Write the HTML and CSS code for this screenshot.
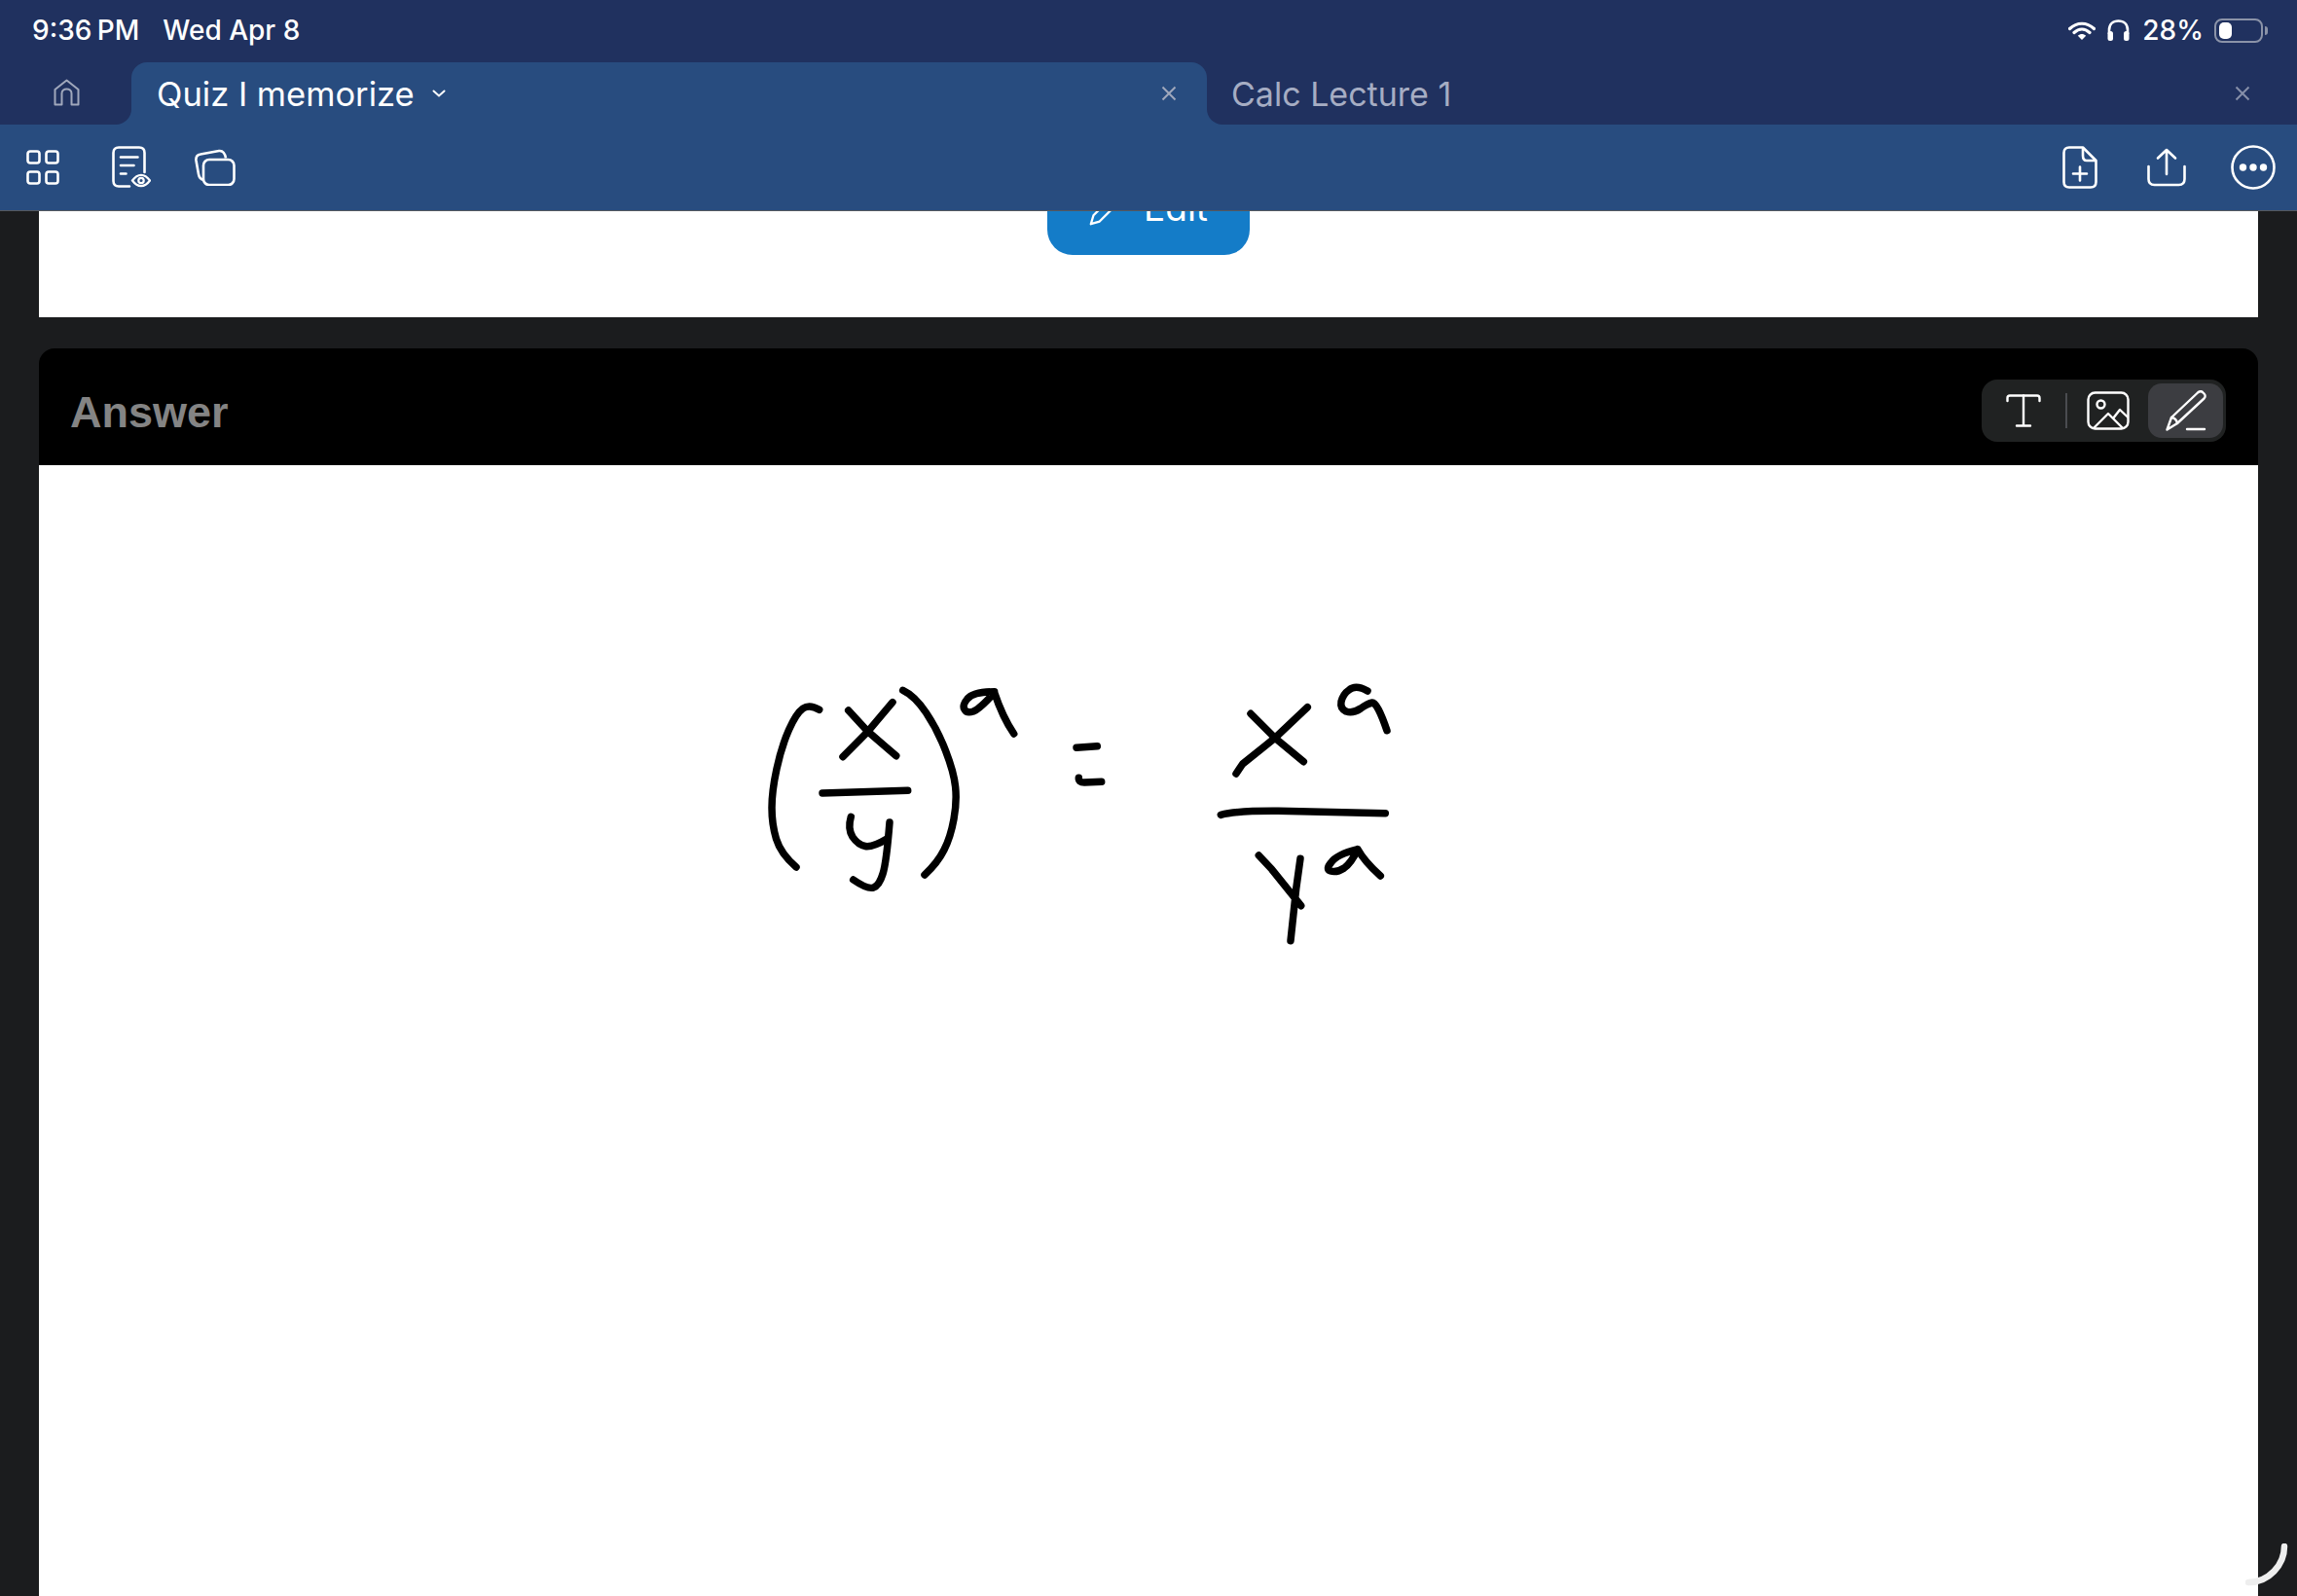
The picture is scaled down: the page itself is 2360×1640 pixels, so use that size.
FILE: index.html
```html
<!DOCTYPE html>
<html lang="en">
<head>
    <meta charset="UTF-8">
    <meta name="viewport" content="width=device-width, initial-scale=1.0">
    <title>Quiz I memorize</title>
    <link rel="stylesheet" href="styles.css">
</head>
<body>
    <header class="app-header">
        <div class="status-bar">
            <div class="status-left">
                <span class="status-time">9:36 PM</span>
                <span>Wed Apr 8</span>
            </div>
            <div class="status-right">
                <svg class="ic-wifi" viewBox="0 0 28 19"><path d="M1.500 7.500C9 .5 19 .5 26.500 7.500M6 11.500C11 7 17 7 22 11.500" fill="none" stroke="#fff" stroke-width="3.200" stroke-linecap="round"/><path d="M9.800 14.800C12.500 12.500 15.500 12.500 18.200 14.800L14 19Z" fill="#fff"/></svg>
                <svg class="ic-phones" viewBox="0 0 23 22"><path d="M2 15V11C2 5 6 1.500 11.500 1.500S21 5 21 11V15" fill="none" stroke="#fff" stroke-width="2.600"/><rect x="0.500" y="12" width="5.500" height="10" rx="2.500" fill="#fff"/><rect x="17" y="12" width="5.500" height="10" rx="2.500" fill="#fff"/></svg>
                <span class="status-pct">28%</span>
                <div class="battery"><div class="battery-fill"></div></div>
                <div class="battery-nub"></div>
            </div>
        </div>

        <div class="tab-row">
            <div class="tab-home">
                <svg class="ic-home" viewBox="0 0 27 28"><path d="M1.500 26.500V11L13.500 1.500 25.500 11V26.500H18.500V15C18.500 9 8.500 9 8.500 15V26.500Z" fill="none" stroke="#a0a8bc" stroke-width="2" stroke-linejoin="round"/></svg>
            </div>
            <div class="tab tab-active">
                <span class="tab-title">Quiz I memorize</span>
                <svg class="ic-chevron" viewBox="0 0 14 8"><path d="M1.500 1.500 7 6.500 12.500 1.500" fill="none" stroke="#fff" stroke-width="2" stroke-linecap="round"/></svg>
                <svg class="ic-close" viewBox="0 0 16 16"><path d="M1.500 1.500 14.500 14.500M14.500 1.500 1.500 14.500" stroke="#a0a8bc" stroke-width="2"/></svg>
            </div>
            <div class="tab tab-other">
                <span class="tab-title">Calc Lecture 1</span>
                <svg class="ic-close" viewBox="0 0 16 16"><path d="M1.500 1.500 14.500 14.500M14.500 1.500 1.500 14.500" stroke="#868fa9" stroke-width="2"/></svg>
            </div>
        </div>

        <div class="toolbar">
            <div class="toolbar-group">
                <svg class="ic-grid" viewBox="0 0 34 36" fill="none" stroke="#fff" stroke-width="2.600">
                    <rect x="1.500" y="1.500" width="12" height="12" rx="2.500"/>
                    <rect x="20.500" y="1.500" width="12" height="12" rx="2.500"/>
                    <rect x="1.500" y="22.500" width="12" height="12" rx="2.500"/>
                    <rect x="20.500" y="22.500" width="12" height="12" rx="2.500"/>
                </svg>
                <svg class="ic-note" viewBox="0 0 40 44" fill="none" stroke="#fff" stroke-width="2.600" stroke-linecap="round">
                    <path d="M18 41.500H7C3.500 41.500 1.500 39.500 1.500 36V7C1.500 3.500 3.500 1.500 7 1.500H28C31.500 1.500 33.500 3.500 33.500 7V27"/>
                    <path d="M9 11.500H26.500M9 20H22.500M9 28.500H14.500"/>
                    <path d="M21 35.500C26.500 28 33.500 28 39 35.500 33.500 43 26.500 43 21 35.500Z" stroke-width="2.200"/>
                    <circle cx="30" cy="35.500" r="2.700" stroke-width="2.200"/>
                </svg>
                <svg class="ic-stack" viewBox="0 0 42 38" fill="none" stroke="#fff" stroke-width="2.600">
                    <path d="M32 9.500C31 4 29 1.500 25 2L6 5.500C2.500 6 1 8 1.500 12L4 26C4.500 29 6 31 9 32"/>
                    <rect x="9" y="11" width="31.500" height="26" rx="6"/>
                </svg>
            </div>
            <div class="toolbar-group toolbar-right">
                <svg class="ic-newfile" viewBox="0 0 36 44" fill="none" stroke="#fff" stroke-width="2.600" stroke-linejoin="round">
                    <path d="M21 1.500H7C3.500 1.500 1.500 3.500 1.500 7V37C1.500 40.500 3.500 42.500 7 42.500H29C32.500 42.500 34.500 40.500 34.500 37V15Z"/>
                    <path d="M21 1.500V10C21 13 22.500 15 25 15H34.500"/>
                    <path d="M18 21.500V35.500M11 28.500H25" stroke-linecap="round"/>
                </svg>
                <svg class="ic-share" viewBox="0 0 40 40" fill="none" stroke="#fff" stroke-width="2.600" stroke-linecap="round" stroke-linejoin="round">
                    <path d="M20 27V2M11 10.500 20 2 29 10.500"/>
                    <path d="M1.500 19V32C1.500 36 3.500 38 7.500 38H32.500C36.500 38 38.500 36 38.500 32V19"/>
                </svg>
                <svg class="ic-more" viewBox="0 0 46 46">
                    <circle cx="23" cy="23" r="21.500" fill="none" stroke="#fff" stroke-width="2.600"/>
                    <circle cx="12.500" cy="23" r="3.700" fill="#fff"/>
                    <circle cx="23" cy="23" r="3.700" fill="#fff"/>
                    <circle cx="33.500" cy="23" r="3.700" fill="#fff"/>
                </svg>
            </div>
        </div>
    </header>

    <main class="page">
        <section class="question-card">
            <button class="edit-btn">
                <svg class="ic-edit" viewBox="0 0 38 38"><path d="M29 2 36 9 12 33 2 36 5 26Z" fill="none" stroke="#fff" stroke-width="2.600" stroke-linejoin="round"/></svg>
                <span>Edit</span>
            </button>
        </section>

        <section class="answer">
            <div class="answer-head">
                <h2 class="answer-title">Answer</h2>
                <div class="mode-picker">
                    <button class="mode-btn mode-text">
                        <svg class="ic-t" viewBox="0 0 36 34" fill="none" stroke="#fff" stroke-width="2.400" stroke-linecap="round">
                            <path d="M1.500 7V4C1.500 2.500 2.500 1.500 4 1.500H32C33.500 1.500 34.500 2.500 34.500 4V7"/>
                            <path d="M18 1.500V32.500M11 32.500H25"/>
                        </svg>
                    </button>
                    <div class="mode-sep"></div>
                    <button class="mode-btn mode-image">
                        <svg class="ic-image" viewBox="0 0 44 40" fill="none" stroke="#fff" stroke-width="2.400" stroke-linejoin="round">
                            <rect x="1.500" y="1.500" width="41" height="37" rx="7"/>
                            <circle cx="14.500" cy="13.500" r="4"/>
                            <path d="M7 38 22 23 37 38M27 28 34 19 42.500 27"/>
                        </svg>
                    </button>
                    <button class="mode-btn mode-pen">
                        <svg class="ic-pen" viewBox="0 0 42 42" fill="none" stroke="#fff" stroke-width="2.400" stroke-linejoin="round" stroke-linecap="round">
                            <path d="M33 2.500C35 .8 37 .8 38.500 2.500L39.500 3.500C41 5 41 7 39.500 8.500L12 34 1.500 40.500 6 28Z"/>
                            <path d="M6 28C9 28.500 11.500 31 12 34M22 40H40"/>
                        </svg>
                    </button>
                </div>
            </div>
            <div class="answer-body">
                <svg class="ink" viewBox="40 478 2280 1162" fill="none" stroke="#000" stroke-width="7.500" stroke-linecap="round" stroke-linejoin="round">
                    <path d="M841.700 729.300Q831.700 723.300 825 728 818 733 810.500 750 803 767 798 790 793 813 793 830 793 847 797.500 862 802 877 818 891"/>
                    <path d="M871.700 730 891.700 751.700 920.700 776.700M917 721.700 891.700 751.700 866 777.700"/>
                    <path d="M845 815 932.700 812.300"/>
                    <path d="M874.300 839.300Q870.700 851.700 876 860 881.700 868.300 889 869.500 896.700 870.700 911.700 861.700"/>
                    <path d="M914 845Q910.700 886.700 907 898 903.300 910 897.500 912 891.700 914.300 876.700 904"/>
                    <path d="M927.700 709.300Q940 715 951.600 732.500 963.300 750 971.600 771.600 980 793.300 981.600 808.300 983.300 823.300 980 841.600 976.700 860 970 873.300 963.300 886.700 950 899"/>
                    <path d="M1021.700 710.700Q1000 711 994 718 988.300 725 991 729 993.300 733.300 1000 731 1006.700 728.300 1021.700 711.700 1030 736.700 1041.700 754"/>
                    <path d="M1106 768.300 1127.300 766.700M1108.300 799.300Q1108 804 1114 804L1131.700 803.300"/>
                    <path d="M1285 733.300 1310 758.300 1339.300 782.700M1343.300 726.700 1310 758.300 1276.700 785 1270 795"/>
                    <path d="M1405 710Q1393 703 1386 709 1380 713 1378 721 1376.700 728 1383 731 1390 733.300 1398 728 1405 723 1410 722 1415 721.700 1425 750.700"/>
                    <path d="M1254.300 837.300Q1270 833 1313.300 833.300L1423.300 835.700"/>
                    <path d="M1293.300 879 1306.700 893.300 1336.700 930.700M1336 882.300 1331.700 913.300 1326 966.700"/>
                    <path d="M1395 872.700Q1373.300 878 1367.500 886.500 1361.700 893.300 1367 895 1373.300 897 1381 892 1388.300 887 1395 872.700 1401.700 885 1418.300 900"/>
                </svg>
            </div>
        </section>
    </main>

    <svg class="corner-arc" viewBox="0 0 44 44"><path d="M40 3C40 22 24 40 3 40" fill="none" stroke="#eee" stroke-width="6.500" stroke-linecap="round"/></svg>
</body>
</html>
```

FILE: styles.css
```css
* {
    margin: 0;
    padding: 0;
    box-sizing: border-box;
}

body {
    font-family: 'Inter', 'Liberation Sans', sans-serif;
    background-color: #1b1c1e;
    height: 100vh;
    overflow: hidden;
    display: flex;
    flex-direction: column;
}

svg {
    display: block;
    flex-shrink: 0;
}

button {
    border: none;
    background: none;
    font-family: inherit;
}

.app-header {
    flex-shrink: 0;
    color: #fff;
    background-color: #284c7f;
    border-bottom: 1px solid #55595f;
}

.status-bar {
    height: 64px;
    padding: 0 30px 2px 33px;
    background-color: #20315f;
    display: flex;
    justify-content: space-between;
    align-items: center;
    font-size: 28px;
    font-weight: 500;
}

.status-left {
    display: flex;
    gap: 24px;
}

.status-time {
    word-spacing: -2px;
}

.status-right {
    display: flex;
    align-items: center;
}

.ic-wifi {
    width: 28px;
    height: 19px;
}

.ic-phones {
    width: 23px;
    height: 22px;
    margin-left: 12px;
}

.status-pct {
    margin-left: 13px;
}

.battery {
    width: 50px;
    height: 25px;
    margin-left: 11px;
    padding: 2px 0 2px 3px;
    border: 2px solid #8b93a8;
    border-radius: 8px;
}

.battery-fill {
    width: 13px;
    height: 17px;
    background-color: #fff;
    border-radius: 5px;
}

.battery-nub {
    width: 3px;
    height: 9px;
    margin-left: 2px;
    background-color: #8b93a8;
    border-radius: 0 3px 3px 0;
}

.tab-row {
    height: 64px;
    display: flex;
    background: linear-gradient(#20315f 50%, #284c7f 50%);
    font-size: 34px;
}

.tab-home {
    width: 135px;
    padding: 17px 0 0 55px;
    background-color: #20315f;
    border-bottom-right-radius: 16px;
}

.ic-home {
    width: 27px;
    height: 28px;
}

.tab {
    display: flex;
    align-items: center;
}

.tab-active {
    width: 1105px;
    padding: 0 31px 0 26px;
    background-color: #284c7f;
    border-radius: 16px 16px 0 0;
}

.tab-active .tab-title {
    font-size: 34.500px;
}

.tab-other {
    flex: 1;
    padding: 0 48px 0 25px;
    background-color: #20315f;
    border-bottom-left-radius: 16px;
    color: #a6adc3;
}

.ic-chevron {
    width: 14px;
    height: 8px;
    margin-left: 18px;
}

.ic-close {
    width: 16px;
    height: 16px;
    margin-left: auto;
}

.toolbar {
    height: 88px;
    padding: 0 22px 0 27px;
    display: flex;
    justify-content: space-between;
    align-items: center;
}

.toolbar-group {
    display: flex;
    align-items: center;
    gap: 45px;
}

.toolbar-right {
    gap: 46px;
}

.ic-grid {
    width: 34px;
    height: 36px;
    margin-right: 9px;
}

.ic-note {
    width: 40px;
    height: 44px;
}

.ic-stack {
    width: 42px;
    height: 38px;
}

.ic-newfile {
    width: 36px;
    height: 44px;
    margin-right: 5px;
}

.ic-share {
    width: 40px;
    height: 40px;
}

.ic-more {
    width: 46px;
    height: 46px;
}

.page {
    flex: 1;
    min-height: 0;
    padding: 0 40px;
    overflow: hidden;
    display: flex;
    flex-direction: column;
}

.question-card {
    height: 109px;
    flex-shrink: 0;
    background-color: #fff;
    display: flex;
    justify-content: center;
}

.edit-btn {
    width: 208px;
    height: 98px;
    margin-top: -53px;
    background-color: #147cc8;
    border-radius: 26px;
    color: #fff;
    font-size: 37px;
    font-weight: 400;
    display: flex;
    justify-content: center;
    align-items: center;
    gap: 22px;
}

.ic-edit {
    width: 34px;
    height: 34px;
    margin-top: 4px;
}

.answer {
    flex: 1;
    margin-top: 32px;
    display: flex;
    flex-direction: column;
}

.answer-head {
    height: 120px;
    flex-shrink: 0;
    padding: 8px 33px 0 32px;
    background-color: #000;
    border-radius: 16px 16px 0 0;
    display: flex;
    justify-content: space-between;
    align-items: center;
}

.answer-title {
    margin-top: 4px;
    font-family: 'Liberation Sans', Arial, sans-serif;
    font-size: 45px;
    font-weight: 700;
    color: #848484;
}

.mode-picker {
    width: 251px;
    height: 64px;
    padding: 4px 3px 4px 0;
    background-color: #202222;
    border-radius: 16px;
    display: flex;
    align-items: center;
}

.mode-btn {
    height: 56px;
    display: flex;
    justify-content: center;
    align-items: center;
}

.mode-text {
    width: 86px;
}

.mode-sep {
    width: 2px;
    height: 36px;
    background-color: #4a4c50;
}

.mode-image {
    width: 83px;
}

.mode-pen {
    width: 77px;
    background-color: #3c3d41;
    border-radius: 14px;
}

.ic-t {
    width: 36px;
    height: 34px;
}

.ic-image {
    width: 44px;
    height: 40px;
}

.ic-pen {
    width: 42px;
    height: 42px;
}

.answer-body {
    flex: 1;
    background-color: #fff;
}

.ink {
    width: 2280px;
    height: 1162px;
}

.corner-arc {
    position: fixed;
    right: 9px;
    bottom: 10px;
    width: 44px;
    height: 44px;
}
```
